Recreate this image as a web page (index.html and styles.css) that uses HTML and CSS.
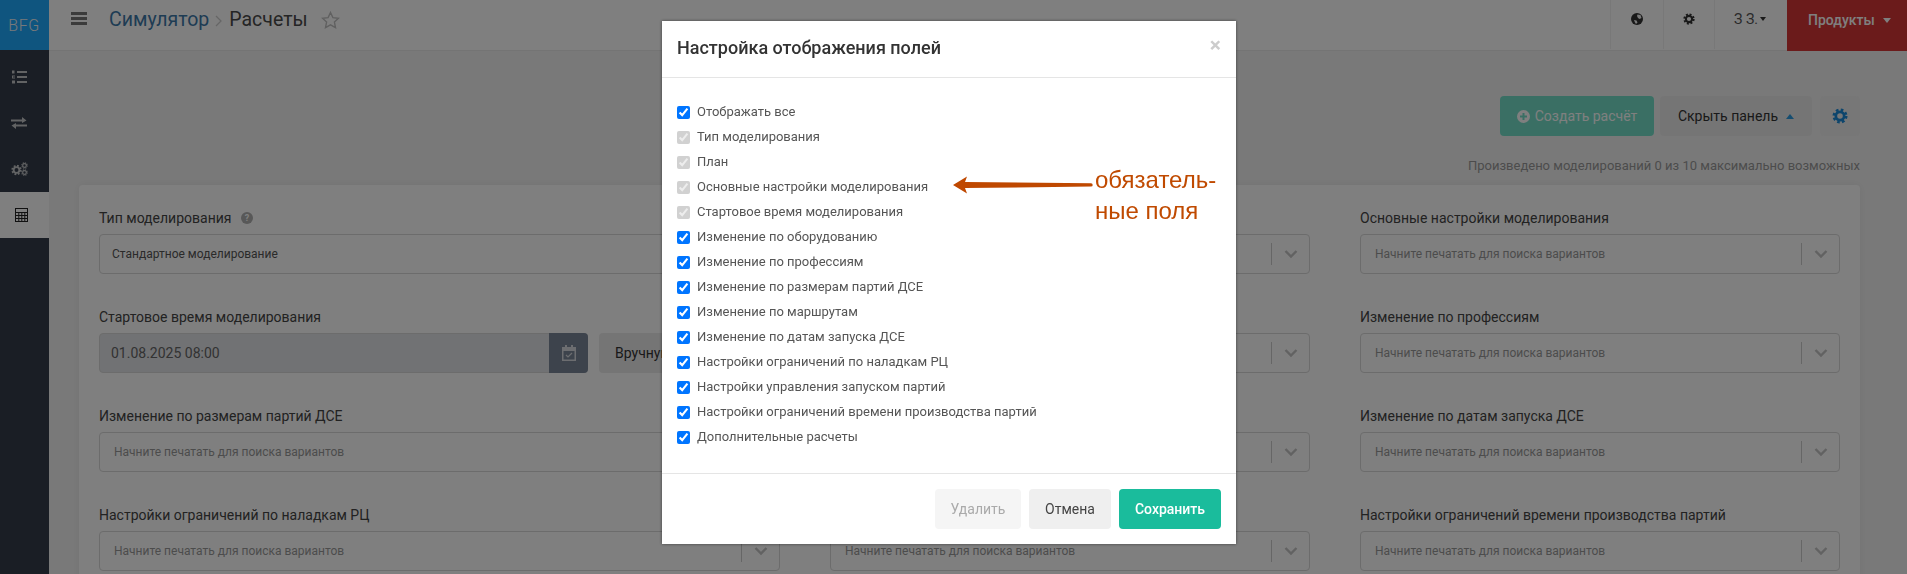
FILE: index.html
```html
<!DOCTYPE html>
<html lang="ru">
<head>
    <meta charset="UTF-8">
    <title>Симулятор - Расчеты</title>
    <link rel="stylesheet" href="styles.css">
</head>
<body>
    <svg class="defs" width="0" height="0">
        <symbol id="cog" viewBox="0 0 20 20">
            <circle cx="10" cy="10" r="5.2" fill="none" stroke="currentColor" stroke-width="3.4"/>
            <circle cx="10" cy="10" r="7.6" fill="none" stroke="currentColor" stroke-width="3.6" stroke-dasharray="3.2 2.77"/>
        </symbol>
        <symbol id="chevron" viewBox="0 0 14 10">
            <path d="M1.5 2l5.5 5.5L12.5 2" fill="none" stroke="currentColor" stroke-width="2.4"/>
        </symbol>
    </svg>

    <div class="app">
        <aside class="sidebar">
            <div class="logo"><span>BFG</span></div>
            <nav class="side-nav">
                <a href="#">
                    <svg width="15" height="14" viewBox="0 0 15 14"><path d="M5 1h10v2H5zM5 6h10v2H5zM5 11h10v2H5z" fill="currentColor"/><path d="M0 .5h2.5v3H0zM0 5.5h3v1H1v1h2v1H0zM0 10.500h3v3H0z" fill="currentColor"/></svg>
                </a>
                <a href="#">
                    <svg width="16" height="12" viewBox="0 0 16 12"><path d="M0 2.500h11V0l4.500 3.500L11 6V4.500H0zM16 7.500H5V6L.5 8.500 5 12V9.500h11z" fill="currentColor"/></svg>
                </a>
                <a href="#">
                    <svg width="17" height="14" viewBox="0 0 17 14"><use href="#cog" x="0" y="2.500" width="11" height="11"/><use href="#cog" x="10" y="0" width="7" height="7"/><use href="#cog" x="10" y="7" width="7" height="7"/></svg>
                </a>
                <a href="#" class="active">
                    <svg width="13" height="14" viewBox="0 0 13 14"><path d="M0 0h13v14H0zM1 1v3h11V1zM1 5v2h2.300V5zM4.300 5v2h2V5zM7.300 5v2h2V5zM10.300 5v2H12V5zM1 8v2h2.300V8zM4.300 8v2h2V8zM7.300 8v2h2V8zM10.300 8v2H12V8zM1 11v2h2.300v-2zM4.300 11v2h2v-2zM7.300 11v2h2v-2zM10.300 11v2H12v-2z" fill="currentColor" fill-rule="evenodd"/></svg>
                </a>
            </nav>
        </aside>

        <div class="main">
            <header class="topbar">
                <svg class="burger" width="16" height="13" viewBox="0 0 16 13"><path d="M0 0h16v3H0zM0 5h16v3H0zM0 10h16v3H0z" fill="currentColor"/></svg>
                <h1 class="crumbs">
                    <a href="#">Симулятор</a>
                    <svg class="crumb-sep" width="7" height="12" viewBox="0 0 7 12"><path d="M1 1l5 5-5 5" fill="none" stroke="currentColor" stroke-width="1.300"/></svg>
                    <span>Расчеты</span>
                </h1>
                <svg class="star" width="19" height="18" viewBox="0 0 19 18"><path d="M9.500 1.500l2.400 5.100 5.600.7-4.100 3.800 1.100 5.500-5-2.700-5 2.700 1.100-5.500L1.500 7.300l5.600-.7z" fill="none" stroke="currentColor" stroke-width="1.400"/></svg>

                <div class="top-right">
                    <div class="top-item globe-item">
                        <svg width="12" height="12" viewBox="0 0 12 12"><circle cx="6" cy="6" r="6" fill="currentColor"/><path d="M6.500 1.500l3 .5 1 3-2 1-1.500-1-1-2zM3 7l2.500.5 1 2-1.500 1.500-1-1.500z" fill="#f3f3f3"/></svg>
                    </div>
                    <div class="top-item cog-item">
                        <svg width="12" height="12"><use href="#cog" width="12" height="12"/></svg>
                    </div>
                    <div class="top-item user-item">З З.<i class="caret small"></i></div>
                    <div class="products">Продукты<i class="caret"></i></div>
                </div>
            </header>

            <div class="content">
                <div class="actions">
                    <button class="btn btn-create">
                        <svg width="13" height="13" viewBox="0 0 13 13"><path d="M6.500 0a6.500 6.500 0 1 0 0 13 6.500 6.500 0 0 0 0-13zM5.500 3h2v2.500H10v2H7.500V10h-2V7.500H3v-2h2.500z" fill="currentColor" fill-rule="evenodd"/></svg>
                        Создать расчёт
                    </button>
                    <button class="btn btn-toggle">Скрыть панель<i class="caret up"></i></button>
                    <button class="btn btn-gear"><svg width="16" height="16"><use href="#cog" width="16" height="16"/></svg></button>
                </div>
                <p class="counter">Произведено моделирований 0 из 10 максимально возможных</p>

                <section class="panel">
                    <div class="field">
                        <label class="field-label">Тип моделирования
                            <svg class="hint" width="12" height="12" viewBox="0 0 12 12"><circle cx="6" cy="6" r="6" fill="currentColor"/><text x="6" y="9.300" text-anchor="middle">?</text></svg>
                        </label>
                        <div class="select"><span class="select-value">Стандартное моделирование</span><svg class="chev"><use href="#chevron"/></svg></div>
                    </div>
                    <!-- средняя колонка почти вся под окном, подписи там не видны -->
                    <div class="field">
                        <label class="field-label"></label>
                        <div class="select"><svg class="chev"><use href="#chevron"/></svg></div>
                    </div>
                    <div class="field">
                        <label class="field-label">Основные настройки моделирования</label>
                        <div class="select"><span>Начните печатать для поиска вариантов</span><svg class="chev"><use href="#chevron"/></svg></div>
                    </div>

                    <div class="field">
                        <label class="field-label">Стартовое время моделирования</label>
                        <div class="date-row">
                            <div class="date-input">
                                <span>01.08.2025 08:00</span>
                                <div class="date-btn">
                                    <svg width="14" height="16" viewBox="0 0 14 16"><path d="M0 2h3V0h2v2h4V0h2v2h3v14H0zM1.500 6v8.500h11V6z" fill="currentColor" fill-rule="evenodd"/><path d="M4 10l2 2 4-4" fill="none" stroke="currentColor" stroke-width="1.200"/></svg>
                                </div>
                            </div>
                            <button class="btn btn-manual">Вручную</button>
                        </div>
                    </div>
                    <div class="field">
                        <label class="field-label"></label>
                        <div class="select"><svg class="chev"><use href="#chevron"/></svg></div>
                    </div>
                    <div class="field">
                        <label class="field-label">Изменение по профессиям</label>
                        <div class="select"><span>Начните печатать для поиска вариантов</span><svg class="chev"><use href="#chevron"/></svg></div>
                    </div>

                    <div class="field">
                        <label class="field-label">Изменение по размерам партий ДСЕ</label>
                        <div class="select"><span>Начните печатать для поиска вариантов</span><svg class="chev"><use href="#chevron"/></svg></div>
                    </div>
                    <div class="field">
                        <label class="field-label"></label>
                        <div class="select"><svg class="chev"><use href="#chevron"/></svg></div>
                    </div>
                    <div class="field">
                        <label class="field-label">Изменение по датам запуска ДСЕ</label>
                        <div class="select"><span>Начните печатать для поиска вариантов</span><svg class="chev"><use href="#chevron"/></svg></div>
                    </div>

                    <div class="field">
                        <label class="field-label">Настройки ограничений по наладкам РЦ</label>
                        <div class="select"><span>Начните печатать для поиска вариантов</span><svg class="chev"><use href="#chevron"/></svg></div>
                    </div>
                    <div class="field">
                        <label class="field-label"></label>
                        <div class="select"><span>Начните печатать для поиска вариантов</span><svg class="chev"><use href="#chevron"/></svg></div>
                    </div>
                    <div class="field">
                        <label class="field-label">Настройки ограничений времени производства партий</label>
                        <div class="select"><span>Начните печатать для поиска вариантов</span><svg class="chev"><use href="#chevron"/></svg></div>
                    </div>
                </section>
            </div>
        </div>
    </div>

    <div class="backdrop">
        <div class="modal">
            <div class="modal-head">
                <h2>Настройка отображения полей</h2>
                <span class="modal-close">×</span>
            </div>
            <div class="modal-body">
                <label class="check"><input type="checkbox" checked>Отображать все</label>
                <label class="check"><input type="checkbox" checked disabled>Тип моделирования</label>
                <label class="check"><input type="checkbox" checked disabled>План</label>
                <label class="check"><input type="checkbox" checked disabled>Основные настройки моделирования</label>
                <label class="check"><input type="checkbox" checked disabled>Стартовое время моделирования</label>
                <label class="check"><input type="checkbox" checked>Изменение по оборудованию</label>
                <label class="check"><input type="checkbox" checked>Изменение по профессиям</label>
                <label class="check"><input type="checkbox" checked>Изменение по размерам партий ДСЕ</label>
                <label class="check"><input type="checkbox" checked>Изменение по маршрутам</label>
                <label class="check"><input type="checkbox" checked>Изменение по датам запуска ДСЕ</label>
                <label class="check"><input type="checkbox" checked>Настройки ограничений по наладкам РЦ</label>
                <label class="check"><input type="checkbox" checked>Настройки управления запуском партий</label>
                <label class="check"><input type="checkbox" checked>Настройки ограничений времени производства партий</label>
                <label class="check"><input type="checkbox" checked>Дополнительные расчеты</label>

                <!-- пометка поверх скриншота -->
                <svg class="note-arrow" width="140" height="18" viewBox="0 0 140 18"><path d="M0 9L14 .5 12 6 138 7.200a1.700 1.700 0 0 1 0 3.400L12 12l2 5.500z" fill="#bf4800"/></svg>
                <div class="note">обязатель-<br>ные поля</div>
            </div>
            <div class="modal-foot">
                <button class="btn btn-delete">Удалить</button>
                <button class="btn btn-cancel">Отмена</button>
                <button class="btn btn-save">Сохранить</button>
            </div>
        </div>
    </div>
</body>
</html>
```

FILE: styles.css
```css
* {
    box-sizing: border-box;
}

html, body {
    height: 100%;
}

body {
    margin: 0;
    overflow: hidden;
    background: #f3f3f3;
    color: #333;
    font-family: Roboto, "Liberation Sans", sans-serif;
    font-size: 14px;
}

.defs {
    position: absolute;
}

.app {
    display: flex;
    height: 574px;
    overflow: hidden;
}

/* sidebar */
.sidebar {
    flex: 0 0 49px;
    background: #343c4a;
}

.logo {
    display: flex;
    height: 50px;
    padding-right: 1px;
    align-items: center;
    justify-content: center;
    background: #1eaaff;
    color: #f0f2f4;
    font-size: 16px;
    font-weight: 300;
    letter-spacing: 0.5px;
}

.side-nav {
    padding-top: 4px;

    a {
        display: flex;
        height: 46px;
        padding-right: 11px;
        align-items: center;
        justify-content: center;
        color: #c4c6c8;
    }
    a.active {
        padding-right: 6px;
        background: #fff;
        color: #222;
    }
}

/* top bar */
.main {
    flex: 1;
    min-width: 0;
}

.topbar {
    display: flex;
    height: 51px;
    padding-bottom: 11px;
    padding-left: 22px;
    align-items: center;
    background: #fff;
    border-bottom: 1px solid #e8e8e8;
}

.burger {
    margin-top: -2px;
    color: #777;
}

.crumbs {
    display: flex;
    margin: 0 0 0 22px;
    align-items: center;
    font-size: 19.500px;
    font-weight: 400;

    a {
        color: #3d78a8;
        text-decoration: none;
    }
    span {
        color: #4a4a4a;
    }
}

.crumb-sep {
    margin: 2px 7px 0 6px;
    color: #ccc;
}

.star {
    margin-left: 13px;
    color: #c0c0c0;
}

.top-right {
    display: flex;
    height: 52px;
    margin-left: auto;
    margin-top: -1px;
    align-self: flex-start;
}

.top-item {
    display: flex;
    height: 50px;
    padding-bottom: 10px;
    align-items: center;
    justify-content: center;
    border-left: 1px solid #f0f0f0;
    color: #333;
    font-size: 14px;
}

.globe-item { width: 53px; }
.cog-item { width: 51px; }

.user-item {
    width: 73px;
    padding-right: 2px;
    color: #555;
}

.products {
    display: flex;
    width: 120px;
    padding-bottom: 10px;
    padding-left: 21px;
    align-items: center;
    background: #d63636;
    color: #fff;
    font-size: 14px;
    font-weight: 500;
}

.caret {
    display: inline-block;
    width: 0;
    height: 0;
    margin-left: 8px;
    border-left: 4.500px solid transparent;
    border-right: 4.500px solid transparent;
    border-top: 5px solid currentColor;
}
.caret.small {
    margin-left: 2px;
    border-left-width: 3.500px;
    border-right-width: 3.500px;
    border-top-width: 4px;
    color: #333;
}
.caret.up {
    border-top: 0;
    border-bottom: 5px solid #2b9be0;
}

/* content */
.content {
    padding: 45px 47px 0 30px;
}

.actions {
    display: flex;
    justify-content: flex-end;
    gap: 8px;
}

.btn {
    display: inline-flex;
    height: 40px;
    padding: 0;
    align-items: center;
    justify-content: center;
    border: 0;
    border-radius: 4px;
    font-family: inherit;
    font-size: 14px;
}

.btn-create {
    width: 154px;
    margin-right: -2px;
    background: #74dfc9;
    color: #fff;
    gap: 5px;

    svg { color: #fff; }
}

.btn-toggle {
    width: 152px;
    background: #ebebeb;
    color: #333;
}

.btn-gear {
    width: 40px;
    background: #efefef;
    color: #1b8bd9;
}

.counter {
    margin: 21px 0 11px;
    height: 17px;
    color: #999;
    font-size: 13px;
    line-height: 17px;
    text-align: right;
}

.panel {
    display: grid;
    grid-template-columns: 1fr 480px 480px;
    column-gap: 50px;
    padding: 23px 20px 0;
    background: #fff;
    border-radius: 4px 4px 0 0;
    box-shadow: 0 0 10px rgba(0, 0, 0, 0.06);
}

.field {
    height: 99px;
    min-width: 0;
}

.field-label {
    display: flex;
    height: 20px;
    margin-bottom: 6px;
    align-items: center;
    color: #444;
    font-size: 14px;
    white-space: nowrap;
}

.hint {
    margin-left: 10px;
    color: #b0b0b0;

    text {
        fill: #fff;
        font-size: 9px;
        font-weight: 700;
    }
}

.select {
    position: relative;
    display: flex;
    height: 40px;
    padding-left: 14px;
    align-items: center;
    border: 1px solid #d8d8d8;
    border-radius: 4px;
    color: #999;
    font-size: 12px;
}
.select::after {
    content: "";
    position: absolute;
    top: 8px;
    right: 37px;
    width: 1px;
    height: 22px;
    background: #ccc;
}

.select-value {
    margin-left: -2px;
    color: #555;
}

.chev {
    position: absolute;
    top: 14px;
    right: 11px;
    width: 14px;
    height: 10px;
    color: #c4c4c4;
}

.date-row {
    display: flex;
    gap: 11px;
}

.date-input {
    display: flex;
    flex: 0 0 489px;
    height: 40px;
    padding-left: 11px;
    align-items: center;
    justify-content: space-between;
    background: #e2e5e8;
    border: 1px solid #d8d8d8;
    border-radius: 4px;
    color: #666;
    font-size: 14px;
}

.date-btn {
    display: flex;
    width: 39px;
    height: 40px;
    margin-right: -1px;
    align-items: center;
    justify-content: center;
    background: #7b8799;
    border-radius: 0 4px 4px 0;
    color: #d8dbe0;
}

.btn-manual {
    flex: 1;
    padding-left: 16px;
    justify-content: flex-start;
    background: #ebebeb;
    color: #333;
}

/* modal */
.backdrop {
    position: fixed;
    inset: 0;
    display: flex;
    padding-top: 21px;
    padding-right: 9px;
    align-items: flex-start;
    justify-content: center;
    background: rgba(0, 0, 0, 0.5);
}

.modal {
    width: 574px;
    background: #fff;
    box-shadow: 0 0 3px rgba(0, 0, 0, 0.5);
}

.modal-head {
    position: relative;
    height: 57px;
    padding: 0 15px;
    border-bottom: 1px solid #e5e5e5;

    h2 {
        margin: 0;
        color: #333;
        font-size: 18px;
        font-weight: 500;
        line-height: 54px;
    }
}

.modal-close {
    position: absolute;
    top: 12px;
    right: 15px;
    color: #ccc;
    font-size: 21px;
    font-weight: 700;
    line-height: 24px;
}

.modal-body {
    position: relative;
    height: 396px;
    padding: 21px 15px 0;
    border-bottom: 1px solid #e5e5e5;
}

.check {
    display: flex;
    height: 25px;
    align-items: center;
    color: #555;
    font-size: 13px;

    input {
        width: 13px;
        height: 13px;
        margin: 1px 7px 0 0;
    }
}

.note-arrow {
    position: absolute;
    top: 98px;
    left: 291px;
}

.note {
    position: absolute;
    top: 86px;
    left: 433px;
    color: #c04a00;
    font-family: "Liberation Sans", sans-serif;
    font-size: 24px;
    line-height: 31px;
}

.modal-foot {
    display: flex;
    height: 70px;
    padding: 15px;
    justify-content: flex-end;
    gap: 8px;
}

.btn-delete {
    width: 86px;
    background: #f5f5f5;
    color: #aaa;
}

.btn-cancel {
    width: 82px;
    background: #efefef;
    color: #444;
}

.btn-save {
    width: 102px;
    background: #1abc9c;
    color: #fff;
    font-weight: 500;
}
```
